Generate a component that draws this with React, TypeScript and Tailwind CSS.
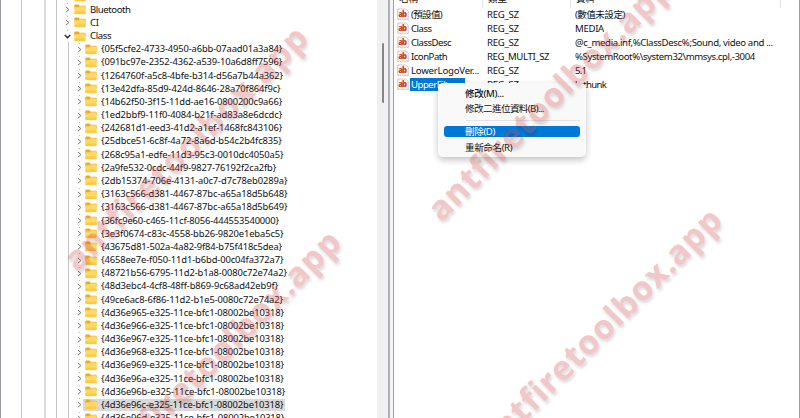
import { useLayoutEffect, useRef, useState } from 'react';

type FitProps = { text: string; w?: number; className?: string };

/** Text whose tracking is adjusted so that it spans `w` pixels. */
function Fit({ text, w, className = '' }: FitProps) {
  const ref = useRef<HTMLSpanElement>(null);
  const [spacing, setSpacing] = useState(0);
  useLayoutEffect(() => {
    if (ref.current && w) setSpacing((w - ref.current.offsetWidth) / text.length);
  }, [text, w]);
  return (
    <span ref={ref} className={`inline-block whitespace-pre ${className}`} style={{ letterSpacing: spacing }}>
      {text}
    </span>
  );
}

const keys: [string, number][] = [
  ['{05f5cfe2-4733-4950-a6bb-07aad01a3a84}', 181],
  ['{091bc97e-2352-4362-a539-10a6d8ff7596}', 181],
  ['{1264760f-a5c8-4bfe-b314-d56a7b44a362}', 182],
  ['{13e42dfa-85d9-424d-8646-28a70f864f9c}', 179],
  ['{14b62f50-3f15-11dd-ae16-0800200c9a66}', 181.5],
  ['{1ed2bbf9-11f0-4084-b21f-ad83a8e6dcdc}', 181],
  ['{242681d1-eed3-41d2-a1ef-1468fc843106}', 181.5],
  ['{25dbce51-6c8f-4a72-8a6d-b54c2b4fc835}', 181],
  ['{268c95a1-edfe-11d3-95c3-0010dc4050a5}', 182.5],
  ['{2a9fe532-0cdc-44f9-9827-76192f2ca2fb}', 175],
  ['{2db15374-706e-4131-a0c7-d7c78eb0289a}', 186],
  ['{3163c566-d381-4467-87bc-a65a18d5b648}', 186],
  ['{3163c566-d381-4467-87bc-a65a18d5b649}', 186],
  ['{36fc9e60-c465-11cf-8056-444553540000}', 178],
  ['{3e3f0674-c83c-4558-bb26-9820e1eba5c5}', 182.5],
  ['{43675d81-502a-4a82-9f84-b75f418c5dea}', 181.5],
  ['{4658ee7e-f050-11d1-b6bd-00c04fa372a7}', 182.5],
  ['{48721b56-6795-11d2-b1a8-0080c72e74a2}', 186],
  ['{48d3ebc4-4cf8-48ff-b869-9c68ad42eb9f}', 177.5],
  ['{49ce6ac8-6f86-11d2-b1e5-0080c72e74a2}', 181.5],
  ['{4d36e965-e325-11ce-bfc1-08002be10318}', 183],
  ['{4d36e966-e325-11ce-bfc1-08002be10318}', 183],
  ['{4d36e967-e325-11ce-bfc1-08002be10318}', 183],
  ['{4d36e968-e325-11ce-bfc1-08002be10318}', 183],
  ['{4d36e969-e325-11ce-bfc1-08002be10318}', 183],
  ['{4d36e96a-e325-11ce-bfc1-08002be10318}', 183],
  ['{4d36e96b-e325-11ce-bfc1-08002be10318}', 184],
  ['{4d36e96c-e325-11ce-bfc1-08002be10318}', 182.5],
  ['{4d36e96d-e325-11ce-bfc1-08002be10318}', 183],
];

const values: [string, number, string, number, string, number][] = [
  ['(預設值)', 31.5, 'REG_SZ', 31.5, '(數值未設定)', 50],
  ['Class', 20.5, 'REG_SZ', 31.5, 'MEDIA', 28.5],
  ['ClassDesc', 40.5, 'REG_SZ', 31.5, '@c_media.inf,%ClassDesc%;Sound, video and ...', 198],
  ['IconPath', 36, 'REG_MULTI_SZ', 62.5, '%SystemRoot%\\system32\\mmsys.cpl,-3004', 180],
  ['LowerLogoVer...', 68, 'REG_SZ', 31.5, '5.1', 11.5],
  ['UpperFilters', 50, 'REG_SZ', 31.5, 'ksthunk', 31],
];

function Folder() {
  return (
    <svg className="h-[11px] w-3 shrink-0" viewBox="0 0 12 11">
      <path d="M.3 1.5Q.3.5 1.3.5h3.2l1.2 1.2h5q1 0 1 1V5H.3z" fill="#efab1d" />
      <path d="M.3 4q0-.8.9-.8h3.4l1-.9h5.2q.9 0 .9.9v6.1q0 .9-.9.9H1.2q-.9 0-.9-.9z" fill="#ffd865" />
      <path d="M.5 7.5h11v1.8q0 .8-.8.8H1.3q-.8 0-.8-.8z" fill="#fdca45" />
    </svg>
  );
}

function Chevron({ open = false }: { open?: boolean }) {
  return (
    <svg className="h-[7px] w-[7px] shrink-0" viewBox="0 0 7 7" fill="none">
      {open ? (
        <path d="M.8 2 3.5 4.8 6.2 2" stroke="#222" strokeWidth="1.3" />
      ) : (
        <path d="M1.9 1 4.9 3.6 1.9 6.2" stroke="#777" strokeWidth="1" />
      )}
    </svg>
  );
}

function StringIcon() {
  return (
    <svg className="h-[13px] w-3 shrink-0" viewBox="0 0 12 13">
      <path d="M.8 1h8l2.4 2.2v8.6l-1.6-.8-1.7.9-1.8-1-1.8 1-1.7-1-1.8.8z" fill="#fafafa" stroke="#b4b4b4" strokeWidth=".7" />
      <text x="1.2" y="8.8" fill="#d83b1d" fontFamily="Open Sans, sans-serif" fontSize="7.8" fontWeight="800" textLength="8.8">ab</text>
    </svg>
  );
}

function Tree() {
  return (
    <div className="relative flex h-full w-[377px] shrink-0 overflow-hidden border-l border-[#9a9aa6] bg-white">
      <div className="flex w-[68px] shrink-0">
        <div className="w-[21px] border-r border-[#c4c4c4]" />
        <div className="w-[24px] border-r-2 border-[#dcdcdc]" />
        <div className="w-[11px] border-r border-[#c4c4c4]" />
        <div className="mt-[42px] w-[12px] border-r border-[#c4c4c4]" />
      </div>
      <div className="-mt-[10px] flex flex-col">
        {['BITS', 'Bluetooth', 'CI', 'Class'].map((name, i) => (
          <div key={name} className="-ml-[5px] flex h-[13.18px] shrink-0 items-center">
            <div className="flex h-full w-[7px] flex-col items-center justify-between">
              <i className="h-px w-px bg-[#bbb]" />
              <Chevron open={i === 3} />
              <i className="h-px w-px bg-transparent" />
            </div>
            <div className="w-[3px]" />
            <Folder />
            <Fit text={name} w={[20, 41, 8.5, 21][i]} className="ml-[4px] text-[9.6px]/[12px]" />
          </div>
        ))}
        {keys.map(([name, w], i) => (
          <div key={name} className="flex h-[13.18px] shrink-0 items-center pl-[7px]">
            <div className="flex h-full w-[7px] flex-col items-center justify-between">
              <i className="h-px w-px bg-[#bbb]" />
              <Chevron />
              <i className="h-px w-px bg-transparent" />
            </div>
            <div className={i === 27 ? 'flex h-[12.6px] w-[202px] items-center bg-[#d9d9d9] pl-[2px]' : 'flex h-full items-center pl-[2px]'}>
              <Folder />
              <Fit text={name} w={w} className="ml-[4px] text-[9.4px]/[12px]" />
            </div>
          </div>
        ))}
      </div>
    </div>
  );
}

function ValueList() {
  return (
    <div className="flex h-full min-w-0 flex-1 flex-col overflow-hidden border-x border-[#a0a0a8] bg-white">
      <div className="flex h-[7.7px] shrink-0 text-[9.6px]/[13px]">
        <div className="w-[89px] border-r border-[#e2e2e2] pl-[5px]"><span className="-mt-[8px] block">名稱</span></div>
        <div className="w-[88px] border-r border-[#e2e2e2] pl-[5px]"><span className="-mt-[8px] block">類型</span></div>
        <div className="w-[210px] border-r border-[#e2e2e2] pl-[5px]"><span className="-mt-[8px] block">資料</span></div>
      </div>
      {values.map(([name, nw, type, tw, data, dw], i) => (
        <div key={name} className="flex h-[13.93px] shrink-0 items-center pl-[3px] text-[9.6px]/[13px]">
          <StringIcon />
          <div className="w-[78px] pl-px">
            <div className={i === 5 ? 'h-[13px] w-[55px] bg-[#0078d7] pl-px text-white' : 'pl-px'}>
              <Fit text={name} w={nw} />
            </div>
          </div>
          <div className="w-[88px]"><Fit text={type} w={tw} /></div>
          <Fit text={data} w={dw} />
        </div>
      ))}
    </div>
  );
}

function ContextMenu() {
  return (
    <div className="absolute left-[438px] top-[83px] flex h-[74px] w-[147.5px] flex-col rounded-[5px] bg-[#f9f9f9] px-[6px] pt-[3px] text-[9.6px]/[11px] shadow-[0_3px_7px_rgba(0,0,0,0.24)]">
      <div className="flex h-[15px] items-center pl-[21px] font-medium"><Fit text="修改(M)..." w={39} /></div>
      <div className="flex h-[15.5px] items-center pl-[21px]"><Fit text="修改二進位資料(B)..." w={79} /></div>
      <div className="ml-[22px] mt-[3px] h-[1.5px] shrink-0 bg-[#e4e4e4]" />
      <div className="mt-[5px] flex h-[11px] shrink-0 items-center rounded-[3px] bg-[#0078d7] pl-[21px] text-white"><Fit text="刪除(D)" w={30} /></div>
      <div className="mt-[3px] flex h-[15px] items-center pl-[21px]"><Fit text="重新命名(R)" w={47} /></div>
    </div>
  );
}

function Watermark({ place }: { place: string }) {
  return (
    <div className={`pointer-events-none absolute flex h-[40px] w-[330px] -rotate-45 items-center justify-center font-['Open_Sans','Noto_Sans',sans-serif] text-[33.5px]/[40px] font-bold text-[#d44848] opacity-30 [text-shadow:-1px_3px_3px_rgba(0,0,0,0.45)] ${place}`}>
      <Fit text="antfiretoolbox.app" w={330} />
    </div>
  );
}

export default function App() {
  return (
    <div className="relative flex h-[418px] w-[800px] overflow-hidden bg-white font-['Noto_Sans','Noto_Sans_CJK_TC',sans-serif] text-[#111]">
      <Tree />
      <div className="w-[11px] shrink-0 bg-[#f0f0f0] pl-[5px] pt-[43px]">
        <div className="h-[60px] w-[1.5px] rounded-full bg-[#868686]" />
      </div>
      <div className="w-[5px] shrink-0 border-l-2 border-[#b0b0b8] bg-[#f3f3f3]" />
      <ValueList />
      <ContextMenu />
      <Watermark place="left-[20px] top-[127px]" />
      <Watermark place="left-[53px] top-[331px]" />
      <Watermark place="left-[384px] top-[77px]" />
      <Watermark place="left-[434px] top-[309px]" />
    </div>
  );
}
